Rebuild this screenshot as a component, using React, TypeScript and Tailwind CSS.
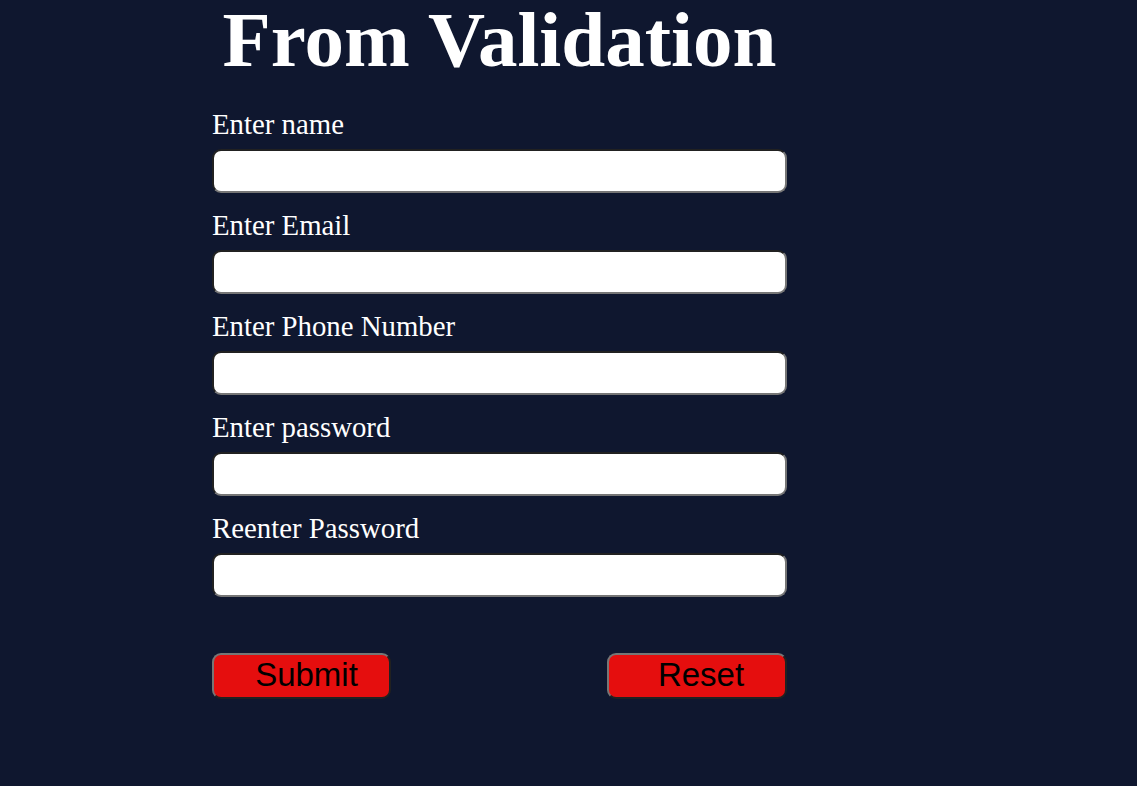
import React from "react";

const fields = [
  "Enter name",
  "Enter Email",
  "Enter Phone Number",
  "Enter password",
  "Reenter Password",
];

export default function App() {
  return (
    <div className="min-h-[786px] w-full bg-[#0f172f] [font-family:'Liberation_Serif',serif]">
      <div className="ml-[212px] w-[575px]">
        <h1 className="m-0 text-center text-[79px] font-bold leading-none text-white">
          From Validation
        </h1>
        <form className="mt-[29px] flex flex-col gap-[16px]">
          {fields.map((f) => (
            <div key={f} className="flex flex-col">
              <label className="block text-[28.8px] leading-[32px] text-white">
                {f}
              </label>
              <input
                type="text"
                className="mt-[9px] h-[44px] w-[575px] rounded-[9px] border-2 border-[#767676] bg-white outline-none [border-style:inset]"
              />
            </div>
          ))}
          <div className="mt-[40px] flex justify-between">
            <button
              type="button"
              className="h-[46px] w-[179px] rounded-[9px] border-2 border-[#767676] bg-[#e50e0e] pb-[3px] pl-[10px] text-[33px] leading-none text-black [border-style:outset] [font-family:'Liberation_Sans',sans-serif]"
            >
              Submit
            </button>
            <button
              type="button"
              className="h-[46px] w-[180px] rounded-[9px] border-2 border-[#767676] bg-[#e50e0e] pb-[3px] pl-[8px] text-[33px] leading-none text-black [border-style:outset] [font-family:'Liberation_Sans',sans-serif]"
            >
              Reset
            </button>
          </div>
        </form>
      </div>
    </div>
  );
}
